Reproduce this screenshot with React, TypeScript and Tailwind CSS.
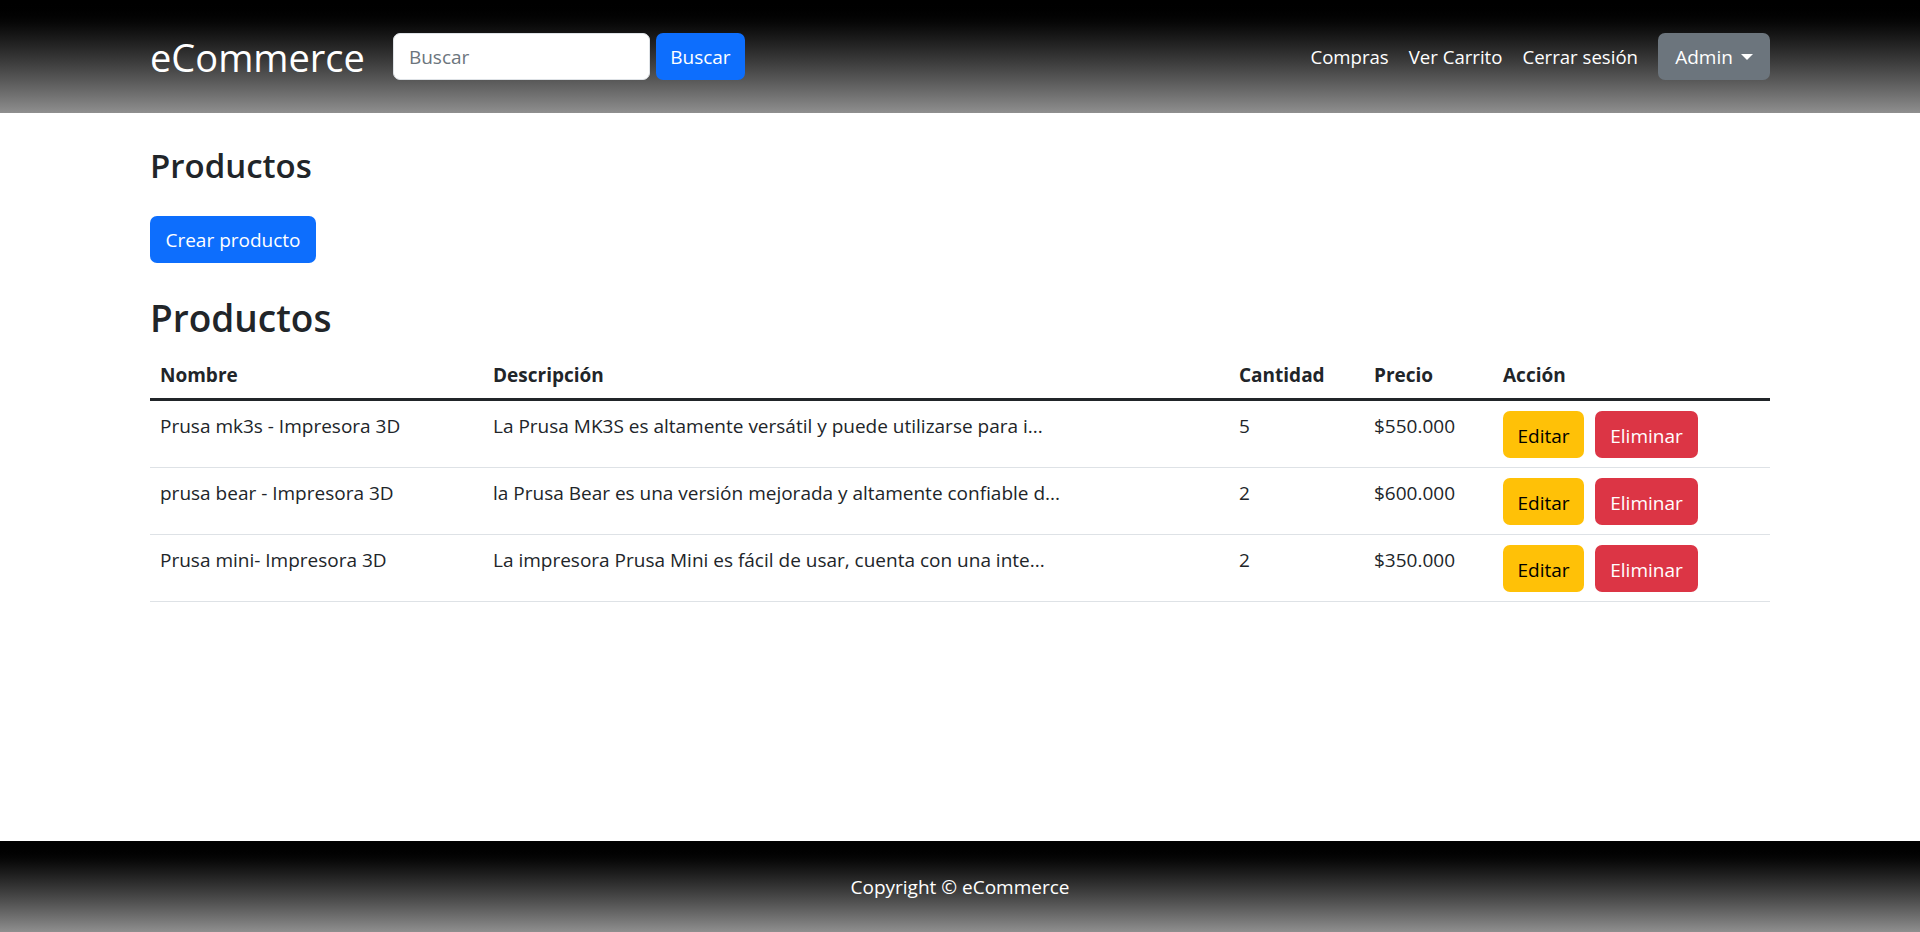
import React from "react";

const rows = [
  {
    nombre: "Prusa mk3s - Impresora 3D",
    desc: "La Prusa MK3S es altamente versátil y puede utilizarse para i...",
    cantidad: "5",
    precio: "$550.000",
  },
  {
    nombre: "prusa bear - Impresora 3D",
    desc: "la Prusa Bear es una versión mejorada y altamente confiable d...",
    cantidad: "2",
    precio: "$600.000",
  },
  {
    nombre: "Prusa mini- Impresora 3D",
    desc: "La impresora Prusa Mini es fácil de usar, cuenta con una inte...",
    cantidad: "2",
    precio: "$350.000",
  },
];

export default function App() {
  return (
    <div
      className="min-h-screen flex flex-col bg-white text-[#212529] text-[19px] leading-[30px]"
      style={{ fontFamily: '"Open Sans", "Noto Sans", Arial, sans-serif' }}
    >
      <nav className="h-[113px] bg-gradient-to-b from-black to-[#8f8f8f]">
        <div className="w-[1620px] mx-auto h-full flex items-center">
          <span className="text-[38px] leading-[48px] text-white mr-[28px]">eCommerce</span>
          <div className="flex items-center">
            <input
              placeholder="Buscar"
              className="w-[257px] h-[47px] rounded-[7px] border border-[#dee2e6] bg-white px-[15px] text-[19px] text-[#212529] placeholder:text-[#6c757d] outline-none"
            />
            <button className="ml-[6px] h-[47px] w-[89px] rounded-[7px] bg-[#0d6efd] text-white text-[19px]">
              Buscar
            </button>
          </div>
          <div className="ml-auto flex items-center text-[18.6px]">
            <a className="px-[10px] text-white">Compras</a>
            <a className="px-[10px] text-white">Ver Carrito</a>
            <a className="px-[10px] text-white">Cerrar sesión</a>
            <button className="ml-[10px] h-[47px] w-[112px] rounded-[7px] bg-[#6c757d] text-white text-[19px] flex items-center justify-center gap-[8px]">
              Admin
              <span className="w-0 h-0 border-l-[6px] border-r-[6px] border-t-[6px] border-l-transparent border-r-transparent border-t-white"></span>
            </button>
          </div>
        </div>
      </nav>

      <main className="flex-1">
        <div className="w-[1620px] mx-auto pt-[32px]">
          <h3 className="text-[33px] leading-[42px] font-semibold mb-[29px]">Productos</h3>
          <button className="h-[47px] w-[166px] rounded-[7px] bg-[#0d6efd] text-white text-[19px]">
            Crear producto
          </button>
          <h2 className="mt-[31px] text-[37px] leading-[48px] font-semibold mb-[8px]">Productos</h2>
          <table className="w-full table-fixed border-collapse">
            <colgroup>
              <col className="w-[333px]" />
              <col className="w-[746px]" />
              <col className="w-[135px]" />
              <col className="w-[129px]" />
              <col className="w-[277px]" />
            </colgroup>
            <thead>
              <tr className="border-b-[3px] border-[#212529]">
                <th className="text-left font-bold px-[10px] pt-[10px] pb-[8px] align-top">Nombre</th>
                <th className="text-left font-bold px-[10px] pt-[10px] pb-[8px] align-top">Descripción</th>
                <th className="text-left font-bold px-[10px] pt-[10px] pb-[8px] align-top">Cantidad</th>
                <th className="text-left font-bold px-[10px] pt-[10px] pb-[8px] align-top">Precio</th>
                <th className="text-left font-bold px-[10px] pt-[10px] pb-[8px] align-top">Acción</th>
              </tr>
            </thead>
            <tbody>
              {rows.map((r) => (
                <tr key={r.nombre} className="border-b border-[#dee2e6]">
                  <td className="p-[10px] align-top whitespace-nowrap">{r.nombre}</td>
                  <td className="p-[10px] align-top whitespace-nowrap">{r.desc}</td>
                  <td className="p-[10px] align-top">{r.cantidad}</td>
                  <td className="p-[10px] align-top">{r.precio}</td>
                  <td className="px-[10px] pt-[10px] pb-[9px] align-top">
                    <div className="flex items-center gap-[11px]">
                      <button className="h-[47px] w-[81px] rounded-[7px] bg-[#ffc107] text-black text-[19px] pt-[3px]">
                        Editar
                      </button>
                      <button className="h-[47px] w-[103px] rounded-[7px] bg-[#dc3545] text-white text-[19px] pt-[3px]">
                        Eliminar
                      </button>
                    </div>
                  </td>
                </tr>
              ))}
            </tbody>
          </table>
        </div>
      </main>

      <footer className="h-[91px] bg-gradient-to-b from-black to-[#8f8f8f] flex items-center justify-center">
        <p className="text-white text-[19px]">Copyright © eCommerce</p>
      </footer>
    </div>
  );
}
